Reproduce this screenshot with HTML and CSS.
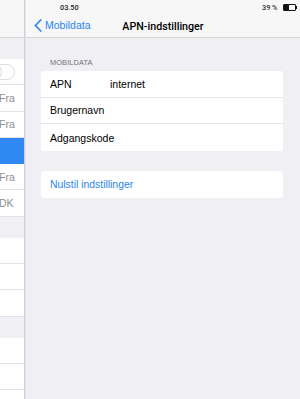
FILE: index.html
```html
<!DOCTYPE html>
<html lang="da">
<head>
<meta charset="utf-8">
<title>APN-indstillinger</title>
<link rel="stylesheet" href="styles.css">
</head>
<body>
<div class="screen">
  <div class="statusbar">
    <span class="time">03.50</span>
    <span class="batt-text">39 %</span>
    <span class="battery"><span class="battery-fill"></span></span>
    <span class="battery-nub"></span>
  </div>

  <aside class="sidebar">
    <div class="navbar"></div>
    <div class="gap gap-top"></div>
    <div class="row"><span class="switch"><span class="knob"></span></span></div>
    <div class="row"><span class="value">Fra</span></div>
    <div class="row"><span class="value">Fra</span></div>
    <div class="row row-selected"></div>
    <div class="row"><span class="value">Fra</span></div>
    <div class="row"><span class="value">DK</span></div>
    <div class="gap"></div>
    <div class="row"></div>
    <div class="row"></div>
    <div class="row"></div>
    <div class="gap"></div>
    <div class="row"></div>
    <div class="row"></div>
    <div class="row"></div>
  </aside>

  <main class="detail">
    <div class="navbar detail-nav">
      <span class="back">
        <svg class="chevron" width="8" height="13" viewBox="0 0 8 13"><path d="M6.8 1 L1.4 6.5 L6.8 12" fill="none" stroke="#2a84f0" stroke-width="1.7" stroke-linecap="round" stroke-linejoin="round"/></svg>
        <span>Mobildata</span>
      </span>
      <span class="title">APN-indstillinger</span>
    </div>

    <div class="section-header">MOBILDATA</div>
    <div class="card">
      <div class="cell"><span class="label">APN</span><span class="field">internet</span></div>
      <div class="cell"><span class="label">Brugernavn</span></div>
      <div class="cell cell-last"><span class="label">Adgangskode</span></div>
    </div>

    <div class="card card-reset">
      <div class="cell cell-last"><span class="link">Nulstil indstillinger</span></div>
    </div>
  </main>
</div>
</body>
</html>
```

FILE: styles.css
```css
html, body {
  margin: 0;
  padding: 0;
}

body {
  width: 300px;
  height: 399px;
  overflow: hidden;
  background: #efeff4;
  font-family: "Liberation Sans", Arial, sans-serif;
  color: #000;
}

.screen {
  position: relative;
  display: flex;
  width: 300px;
  height: 399px;
}

/* status bar overlays both panes */
.statusbar {
  position: absolute;
  z-index: 5;
  top: 0;
  left: 0;
  right: 0;
  height: 15px;
  display: flex;
  align-items: center;
  font-family: Roboto, "Liberation Sans", sans-serif;
  font-size: 7.3px;
  font-weight: 500;
  color: #222;
  padding-right: 3px;
}

.time {
  margin-left: 60px;
  flex: 1;
}

.batt-text {
  margin-right: 5px;
  color: #333;
}

.battery {
  width: 11px;
  height: 5px;
  border: 1px solid #111;
  border-radius: 1px;
  display: flex;
}

.battery-fill {
  width: 5px;
  background: #111;
}

.battery-nub {
  width: 1.5px;
  height: 3px;
  background: #111;
}

/* sidebar (master pane) */
.sidebar {
  width: 24px;
  flex: none;
  border-right: 1px solid #cfcfd3;
  box-shadow: 1px 0 0 #e6e6ea;
  background: #efeff4;
  display: flex;
  flex-direction: column;
  overflow: hidden;
}

.navbar {
  height: 38px;
  flex: none;
  box-sizing: border-box;
  background: #f7f7f8;
  border-bottom: 1px solid #d6d6da;
}

.gap {
  height: 21px;
  flex: none;
}

.row {
  height: 26.3px;
  flex: none;
  box-sizing: border-box;
  background: #fff;
  border-bottom: 1px solid #e3e3e6;
  display: flex;
  align-items: center;
  font-size: 10.5px;
}

.row-selected {
  background: #2f88f4;
  border-bottom-color: #2f88f4;
}

.value {
  color: #8e8e93;
  margin-left: -1px;
}

.switch {
  position: relative;
  width: 30px;
  height: 16px;
  margin-left: -15px;
  border: 1px solid #dcdce0;
  border-radius: 9px;
  box-sizing: border-box;
  background: #fff;
}

.knob {
  position: absolute;
  left: -1px;
  top: -1px;
  width: 17px;
  height: 16px;
  box-sizing: border-box;
  border: 1px solid #d8d8dc;
  border-radius: 50%;
  background: #fff;
}

/* detail pane */
.detail {
  flex: 1;
  display: flex;
  flex-direction: column;
  margin-left: 1px;
}

.detail-nav {
  display: flex;
  align-items: center;
  position: relative;
  padding-top: 13px;
  padding-left: 8px;
}

.back {
  display: flex;
  align-items: center;
  gap: 3px;
  color: #2a84f0;
  font-size: 10.5px;
}

.title {
  position: absolute;
  left: 0;
  right: 0;
  top: 19.5px;
  text-align: center;
  font-family: Roboto, "Liberation Sans", sans-serif;
  font-size: 10.7px;
  font-weight: 500;
  pointer-events: none;
}

.section-header {
  margin: 20px 0 0 24px;
  height: 13px;
  font-size: 7.4px;
  color: #727277;
  letter-spacing: 0.1px;
}

.card {
  margin: 0 17px 0 15px;
  background: #fff;
  border-radius: 3px;
  overflow: hidden;
}

.card-reset {
  margin-top: 20px;
}

.cell {
  height: 26.5px;
  box-sizing: border-box;
  border-bottom: 1px solid #e6e6e9;
  display: flex;
  align-items: center;
  padding-left: 9px;
  font-size: 10.5px;
}

.cell-last {
  border-bottom: none;
  height: 27px;
}

.label {
  width: 60px;
}

.link {
  color: #2a84f0;
  font-size: 10.4px;
}
```
